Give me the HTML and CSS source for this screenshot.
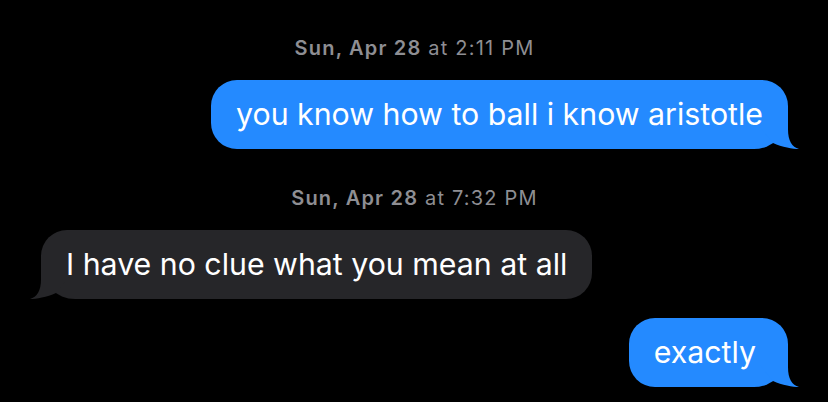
FILE: index.html
```html
<!DOCTYPE html>
<html>
<head>
<meta charset="utf-8">
<link rel="stylesheet" href="styles.css">
</head>
<body>
<div class="thread">
  <div class="stamp"><span class="day">Sun, Apr 28</span> at 2:11 PM</div>
  <div class="row row-sent">
    <div class="bubble sent"><span class="msg">you know how to ball i know aristotle</span><svg class="tail" width="40" height="36" viewBox="0 0 40 36"><path d="M0,0 H28 V16 C28,28 32,34 39,36 C33,36 22,34 13,30 L0,14 Z"/></svg></div>
  </div>
  <div class="stamp stamp-gap"><span class="day">Sun, Apr 28</span> at 7:32 PM</div>
  <div class="row row-recv">
    <div class="bubble recv"><span class="msg">I have no clue what you mean at all</span><svg class="tail" width="40" height="36" viewBox="0 0 40 36"><path d="M0,0 H28 V16 C28,28 32,34 39,36 C33,36 22,34 13,30 L0,14 Z"/></svg></div>
  </div>
  <div class="row row-sent row-tight">
    <div class="bubble sent bubble-short"><span class="msg">exactly</span><svg class="tail" width="40" height="36" viewBox="0 0 40 36"><path d="M0,0 H28 V16 C28,28 32,34 39,36 C33,36 22,34 13,30 L0,14 Z"/></svg></div>
  </div>
</div>
</body>
</html>
```
FILE: styles.css
```css
html, body {
  margin: 0;
  background: #000;
  height: 100%;
}
.thread {
  display: flex;
  flex-direction: column;
  padding: 36px 40px 0 41px;
  font-family: Inter, "Noto Sans", sans-serif;
}
.stamp {
  text-align: center;
  color: #8e8e93;
  font-size: 20px;
  line-height: 24px;
  letter-spacing: 1.2px;
  margin-bottom: 20px;
}
.stamp-gap {
  margin-top: 37px;
}
.day {
  font-weight: 600;
}
.row {
  display: flex;
}
.row-sent {
  justify-content: flex-end;
}
.row-recv {
  justify-content: flex-start;
}
.row-tight {
  margin-top: 19px;
}
.bubble {
  position: relative;
  font-size: 30.3px;
  line-height: 37px;
  padding: 16px 25px;
  color: #fff;
  white-space: nowrap;
}
.bubble-short {
  padding-right: 32px;
}
.msg {
  position: relative;
  z-index: 1;
}
.sent {
  background: #248aff;
  border-radius: 26px 26px 34px 26px;
}
.recv {
  background: #262629;
  border-radius: 26px 26px 26px 34px;
}
.tail {
  position: absolute;
  bottom: 0;
  display: block;
}
.sent .tail {
  right: -12px;
  fill: #248aff;
}
.recv .tail {
  left: -12px;
  fill: #262629;
  transform: scaleX(-1);
}
```
